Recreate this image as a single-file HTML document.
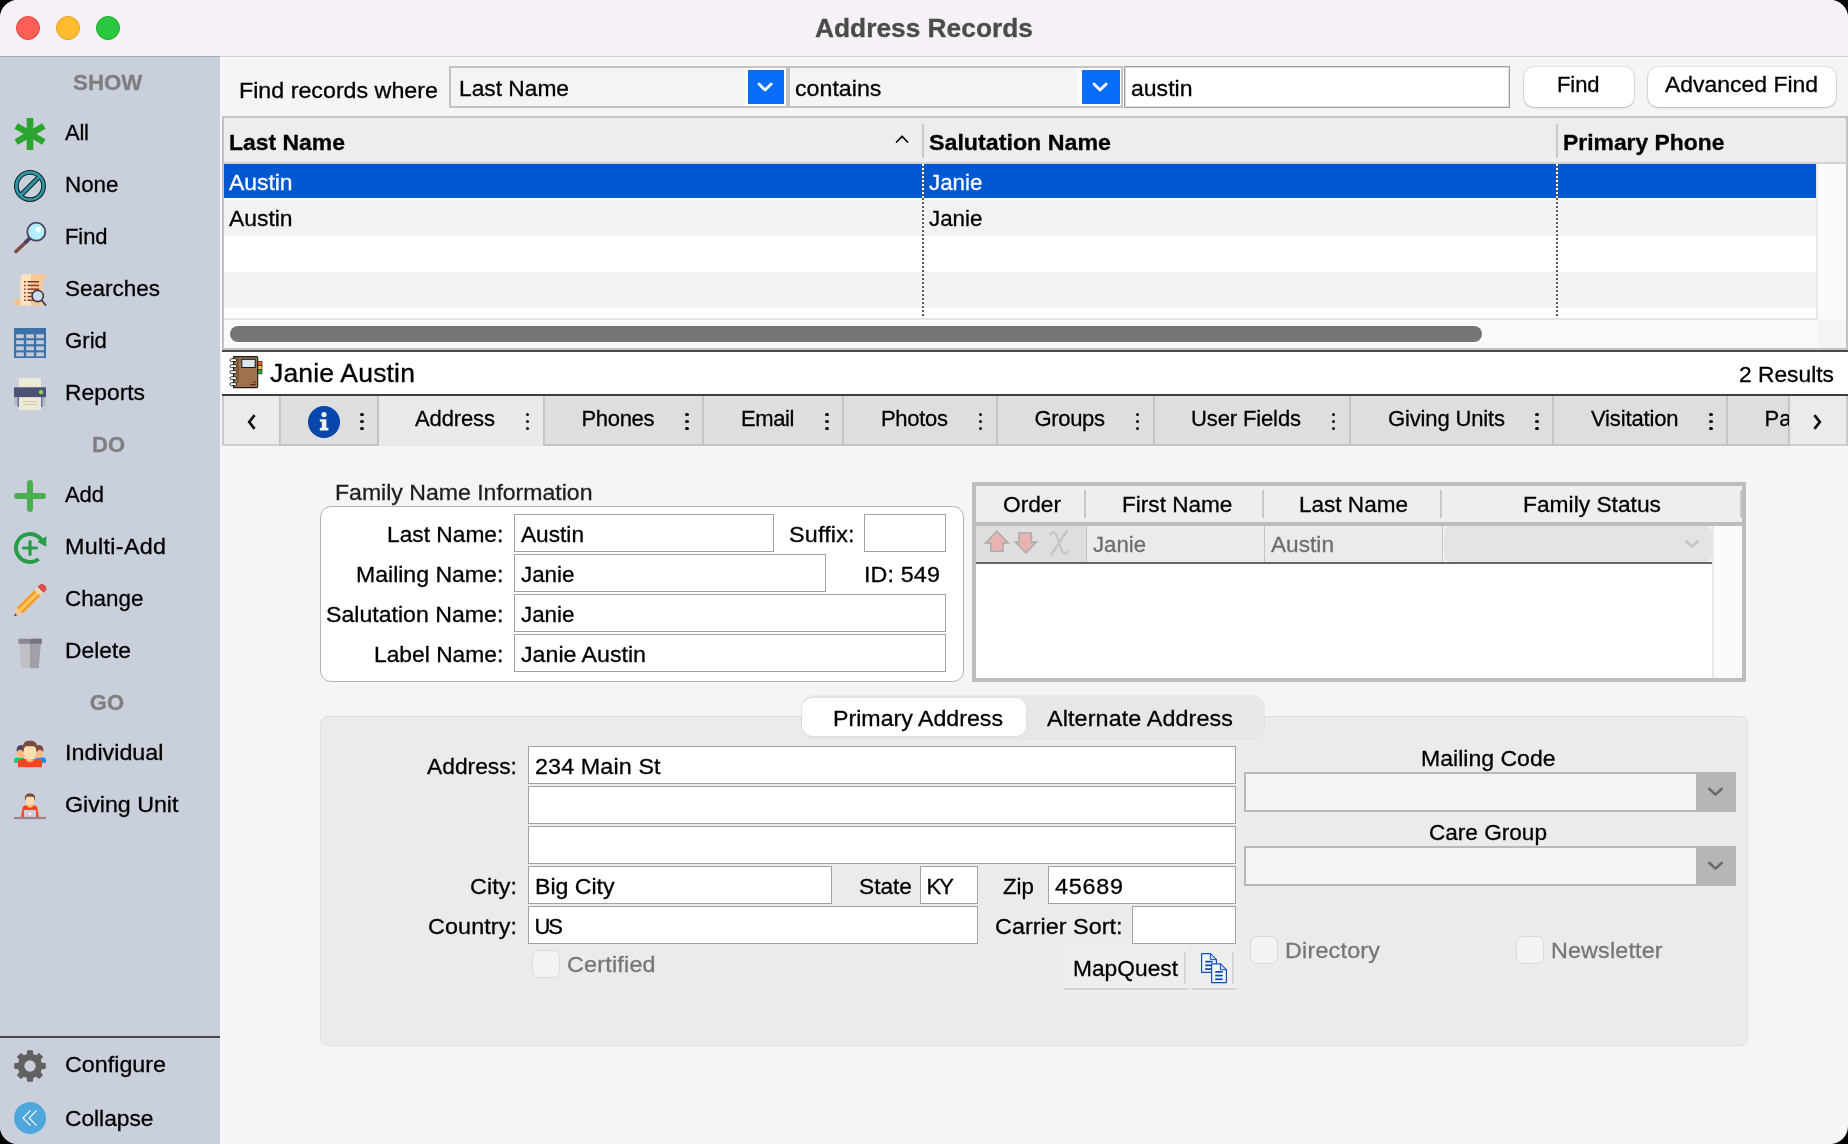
<!DOCTYPE html>
<html><head><meta charset="utf-8"><title>Address Records</title>
<style>
html,body{margin:0;padding:0;background:#000;}
body{width:1848px;height:1144px;overflow:hidden;position:relative;font-family:"Liberation Sans",sans-serif;}
#win{position:absolute;left:0;top:0;width:1848px;height:1144px;border-radius:18px;overflow:hidden;background:#f5f5f5;}
#win div,#win span,#win svg{position:absolute;box-sizing:border-box;}
.t{white-space:nowrap;line-height:1;transform-origin:0 0;-webkit-text-stroke:0.3px;}
#tl{left:0;top:0;width:1848px;height:1144px;will-change:transform;}
.in{background:#fff;border:1px solid #a3a3a3;}
</style></head><body><div id="win">
<div style="left:0px;top:0px;width:1848px;height:56px;background:#f6f1f7;"></div>
<div style="left:0px;top:56px;width:1848px;height:1px;background:#d2d0d4;"></div>
<div style="left:16px;top:16px;width:24px;height:24px;border-radius:50%;background:#fe5f57;border:1px solid #e0443e;"></div>
<div style="left:56px;top:16px;width:24px;height:24px;border-radius:50%;background:#febc2e;border:1px solid #dea123;"></div>
<div style="left:96px;top:16px;width:24px;height:24px;border-radius:50%;background:#28c840;border:1px solid #1aab29;"></div>
<div style="left:0px;top:57px;width:220px;height:1087px;background:#c9d0db;"></div>
<div style="left:0px;top:56px;width:220px;height:1px;background:#a3acb8;"></div>
<div style="left:0px;top:1036px;width:220px;height:2px;background:#484848;"></div>
<div style="left:449px;top:66px;width:339px;height:42px;background:#f4f4f4;border:2px solid #c3c3c3;overflow:hidden;"><div style="left:297px;top:2px;width:36px;height:34px;background:#096df9;box-shadow:0 0 0 2px #fff,-3px 0 2px 1px rgba(255,255,255,0.8);"><svg width="36" height="34" viewBox="0 0 36 34" style="left:0;top:0"><path d="M11.0 13.9 L17.1 20 L23.2 13.9" fill="none" stroke="#fff" stroke-width="2.8" stroke-linecap="round" stroke-linejoin="round"/></svg></div></div>
<div style="left:788px;top:66px;width:335px;height:42px;background:#f4f4f4;border:2px solid #c3c3c3;overflow:hidden;"><div style="left:292px;top:2px;width:38px;height:34px;background:#096df9;box-shadow:0 0 0 2px #fff,-3px 0 2px 1px rgba(255,255,255,0.8);"><svg width="38" height="34" viewBox="0 0 38 34" style="left:0;top:0"><path d="M12.0 13.9 L18.1 20 L24.2 13.9" fill="none" stroke="#fff" stroke-width="2.8" stroke-linecap="round" stroke-linejoin="round"/></svg></div></div>
<div style="left:1124px;top:66px;width:386px;height:42px;background:#fff;border:1px solid #9e9e9e;box-shadow:inset 0 0 0 1px #dcdcdc;"></div>
<div style="left:1524px;top:67px;width:110px;height:40px;background:#fff;border-radius:10px;box-shadow:0 0 0 1px rgba(0,0,0,0.07),0 1px 2px rgba(0,0,0,0.18);"></div>
<div style="left:1648px;top:67px;width:188px;height:40px;background:#fff;border-radius:10px;box-shadow:0 0 0 1px rgba(0,0,0,0.07),0 1px 2px rgba(0,0,0,0.18);"></div>
<div style="left:222px;top:116px;width:1626px;height:234px;background:#c2c2c2;"></div>
<div style="left:224px;top:118px;width:1622px;height:230px;background:#fff;"></div>
<div style="left:224px;top:118px;width:1622px;height:45px;background:#ededed;"></div>
<div style="left:224px;top:162px;width:1622px;height:2px;background:#d5d2ce;"></div>
<div style="left:224px;top:164px;width:1592px;height:34px;background:#0058d0;"></div>
<div style="left:224px;top:200px;width:1592px;height:36px;background:#f1f2f2;"></div>
<div style="left:224px;top:272px;width:1592px;height:36px;background:#f1f2f2;"></div>
<div style="left:1816px;top:164px;width:30px;height:156px;background:#fafafa;border-left:2px solid #e9e9e9;"></div>
<div style="left:224px;top:318px;width:1594px;height:2px;background:#e6e6e6;"></div>
<div style="left:224px;top:320px;width:1622px;height:28px;background:#fafafa;"></div>
<div style="left:1818px;top:320px;width:28px;height:28px;background:#f4f4f4;"></div>
<div style="left:230px;top:326px;width:1252px;height:16px;background:#757575;border-radius:8px;"></div>
<div style="left:922px;top:124px;width:2px;height:34px;background:#c9c9c9;"></div>
<div style="left:1556px;top:124px;width:2px;height:34px;background:#c9c9c9;"></div>
<div style="left:922px;top:164px;width:2px;height:153px;background-image:repeating-linear-gradient(to bottom,#fff 0,#fff 2px,#5c5854 2px,#5c5854 4px);"></div>
<div style="left:1556px;top:164px;width:2px;height:153px;background-image:repeating-linear-gradient(to bottom,#fff 0,#fff 2px,#5c5854 2px,#5c5854 4px);"></div>
<svg width="16" height="12" viewBox="0 0 16 12" style="left:894px;top:132px"><path d="M2.6 10 L8.1 4.3 L13.6 10" fill="none" stroke="#111" stroke-width="1.8" stroke-linecap="round" stroke-linejoin="round"/></svg>
<div style="left:222px;top:350px;width:1626px;height:2px;background:#4a4a4a;"></div>
<div style="left:222px;top:352px;width:1626px;height:42px;background:#fff;"></div>
<div style="left:222px;top:394px;width:1626px;height:2px;background:#3c3c3c;"></div>
<div style="left:222px;top:396px;width:1626px;height:50px;background:#dedede;"></div>
<div style="left:222px;top:444px;width:1626px;height:2px;background:#c5c5c5;"></div>
<div style="left:222px;top:396px;width:58px;height:50px;background:#ebebeb;border-left:2px solid #c9c9c9;border-bottom:2px solid #cfcfcf;"></div>
<div style="left:1789px;top:396px;width:57px;height:50px;background:#ebebeb;border-bottom:2px solid #cfcfcf;"></div>
<div style="left:1846px;top:396px;width:2px;height:50px;background:#c9c9c9;"></div>
<div style="left:378px;top:396px;width:166px;height:50px;background:#eaeaea;"></div>
<div style="left:279px;top:396px;width:2px;height:50px;background:#c5c5c5;"></div>
<div style="left:377px;top:396px;width:2px;height:50px;background:#c5c5c5;"></div>
<div style="left:543px;top:396px;width:2px;height:50px;background:#c5c5c5;"></div>
<div style="left:702px;top:396px;width:2px;height:50px;background:#c5c5c5;"></div>
<div style="left:842px;top:396px;width:2px;height:50px;background:#c5c5c5;"></div>
<div style="left:996px;top:396px;width:2px;height:50px;background:#c5c5c5;"></div>
<div style="left:1153px;top:396px;width:2px;height:50px;background:#c5c5c5;"></div>
<div style="left:1349px;top:396px;width:2px;height:50px;background:#c5c5c5;"></div>
<div style="left:1552px;top:396px;width:2px;height:50px;background:#c5c5c5;"></div>
<div style="left:1726px;top:396px;width:2px;height:50px;background:#c5c5c5;"></div>
<div style="left:1788px;top:396px;width:2px;height:50px;background:#c5c5c5;"></div>
<div style="left:360.4px;top:412.5px;width:3.2000000000000455px;height:3.2000000000000455px;background:#0a0a0a;border-radius:50%;"></div>
<div style="left:360.4px;top:419.79999999999995px;width:3.2000000000000455px;height:3.2000000000000455px;background:#0a0a0a;border-radius:50%;"></div>
<div style="left:360.4px;top:427.09999999999997px;width:3.2000000000000455px;height:3.2000000000000455px;background:#0a0a0a;border-radius:50%;"></div>
<div style="left:525.9px;top:412.5px;width:3.2000000000000455px;height:3.2000000000000455px;background:#0a0a0a;border-radius:50%;"></div>
<div style="left:525.9px;top:419.79999999999995px;width:3.2000000000000455px;height:3.2000000000000455px;background:#0a0a0a;border-radius:50%;"></div>
<div style="left:525.9px;top:427.09999999999997px;width:3.2000000000000455px;height:3.2000000000000455px;background:#0a0a0a;border-radius:50%;"></div>
<div style="left:685.4px;top:412.5px;width:3.2000000000000455px;height:3.2000000000000455px;background:#0a0a0a;border-radius:50%;"></div>
<div style="left:685.4px;top:419.79999999999995px;width:3.2000000000000455px;height:3.2000000000000455px;background:#0a0a0a;border-radius:50%;"></div>
<div style="left:685.4px;top:427.09999999999997px;width:3.2000000000000455px;height:3.2000000000000455px;background:#0a0a0a;border-radius:50%;"></div>
<div style="left:825.4px;top:412.5px;width:3.2000000000000455px;height:3.2000000000000455px;background:#0a0a0a;border-radius:50%;"></div>
<div style="left:825.4px;top:419.79999999999995px;width:3.2000000000000455px;height:3.2000000000000455px;background:#0a0a0a;border-radius:50%;"></div>
<div style="left:825.4px;top:427.09999999999997px;width:3.2000000000000455px;height:3.2000000000000455px;background:#0a0a0a;border-radius:50%;"></div>
<div style="left:978.9px;top:412.5px;width:3.2000000000000455px;height:3.2000000000000455px;background:#0a0a0a;border-radius:50%;"></div>
<div style="left:978.9px;top:419.79999999999995px;width:3.2000000000000455px;height:3.2000000000000455px;background:#0a0a0a;border-radius:50%;"></div>
<div style="left:978.9px;top:427.09999999999997px;width:3.2000000000000455px;height:3.2000000000000455px;background:#0a0a0a;border-radius:50%;"></div>
<div style="left:1135.9px;top:412.5px;width:3.199999999999818px;height:3.2000000000000455px;background:#0a0a0a;border-radius:50%;"></div>
<div style="left:1135.9px;top:419.79999999999995px;width:3.199999999999818px;height:3.2000000000000455px;background:#0a0a0a;border-radius:50%;"></div>
<div style="left:1135.9px;top:427.09999999999997px;width:3.199999999999818px;height:3.2000000000000455px;background:#0a0a0a;border-radius:50%;"></div>
<div style="left:1331.9px;top:412.5px;width:3.199999999999818px;height:3.2000000000000455px;background:#0a0a0a;border-radius:50%;"></div>
<div style="left:1331.9px;top:419.79999999999995px;width:3.199999999999818px;height:3.2000000000000455px;background:#0a0a0a;border-radius:50%;"></div>
<div style="left:1331.9px;top:427.09999999999997px;width:3.199999999999818px;height:3.2000000000000455px;background:#0a0a0a;border-radius:50%;"></div>
<div style="left:1535.4px;top:412.5px;width:3.199999999999818px;height:3.2000000000000455px;background:#0a0a0a;border-radius:50%;"></div>
<div style="left:1535.4px;top:419.79999999999995px;width:3.199999999999818px;height:3.2000000000000455px;background:#0a0a0a;border-radius:50%;"></div>
<div style="left:1535.4px;top:427.09999999999997px;width:3.199999999999818px;height:3.2000000000000455px;background:#0a0a0a;border-radius:50%;"></div>
<div style="left:1709.4px;top:412.5px;width:3.199999999999818px;height:3.2000000000000455px;background:#0a0a0a;border-radius:50%;"></div>
<div style="left:1709.4px;top:419.79999999999995px;width:3.199999999999818px;height:3.2000000000000455px;background:#0a0a0a;border-radius:50%;"></div>
<div style="left:1709.4px;top:427.09999999999997px;width:3.199999999999818px;height:3.2000000000000455px;background:#0a0a0a;border-radius:50%;"></div>
<svg width="12" height="18" viewBox="0 0 12 18" style="left:246px;top:413px"><path d="M8.6 2.2 L3.2 9 L8.6 15.8" fill="none" stroke="#111" stroke-width="2.7" stroke-linejoin="miter"/></svg>
<svg width="12" height="18" viewBox="0 0 12 18" style="left:1811px;top:413px"><path d="M3.4 2.2 L8.8 9 L3.4 15.8" fill="none" stroke="#111" stroke-width="2.7" stroke-linejoin="miter"/></svg>
<svg width="34" height="34" viewBox="0 0 34 34" style="left:307px;top:405px"><circle cx="17" cy="17" r="16" fill="#0746ab"/><circle cx="17" cy="9.6" r="2.6" fill="#f0f0f0"/><path d="M12.8 14.2 H19.4 V22.8 H21.4 V25.4 H12.8 V22.8 H14.9 V16.8 H12.8 Z" fill="#f0f0f0"/></svg>
<div style="left:320px;top:506px;width:644px;height:176px;background:#fff;border:1px solid #b4b4b4;border-radius:11px;"></div>
<div style="left:514px;top:514px;width:260px;height:38px;background:#fff;border:1px solid #a3a3a3;"></div>
<div style="left:864px;top:514px;width:82px;height:38px;background:#fff;border:1px solid #a3a3a3;"></div>
<div style="left:514px;top:554px;width:312px;height:38px;background:#fff;border:1px solid #a3a3a3;"></div>
<div style="left:514px;top:594px;width:432px;height:38px;background:#fff;border:1px solid #a3a3a3;"></div>
<div style="left:514px;top:634px;width:432px;height:38px;background:#fff;border:1px solid #a3a3a3;"></div>
<div style="left:972px;top:482px;width:774px;height:200px;background:#bdbdbd;"></div>
<div style="left:976px;top:486px;width:766px;height:192px;background:#fff;"></div>
<div style="left:976px;top:486px;width:766px;height:36px;background:#eeeeee;"></div>
<div style="left:976px;top:522px;width:766px;height:4px;background:#bdbdbd;"></div>
<div style="left:1084px;top:490px;width:2px;height:28px;background:#c9c9c9;"></div>
<div style="left:1262px;top:490px;width:2px;height:28px;background:#c9c9c9;"></div>
<div style="left:1440px;top:490px;width:2px;height:28px;background:#c9c9c9;"></div>
<div style="left:1740px;top:490px;width:2px;height:28px;background:#c9c9c9;"></div>
<div style="left:976px;top:526px;width:110px;height:36px;background:#dedede;"></div>
<div style="left:1086px;top:526px;width:1px;height:36px;background:#c4c4c4;"></div>
<div style="left:1087px;top:526px;width:177px;height:36px;background:#ebebeb;"></div>
<div style="left:1264px;top:526px;width:1px;height:36px;background:#c4c4c4;"></div>
<div style="left:1265px;top:526px;width:177px;height:36px;background:#ebebeb;"></div>
<div style="left:1442px;top:526px;width:1px;height:36px;background:#c4c4c4;"></div>
<div style="left:1443px;top:526px;width:269px;height:36px;background:#f2f2f2;"></div>
<div style="left:1444px;top:526px;width:268px;height:36px;background:#e4e4e4;border-radius:7px;"></div>
<svg width="18" height="12" viewBox="0 0 18 12" style="left:1683px;top:538px"><path d="M3.2 3.2 L9 8.6 L14.800 3.2" fill="none" stroke="#c4c4c4" stroke-width="2.6" stroke-linecap="round" stroke-linejoin="round"/></svg>
<div style="left:976px;top:562px;width:736px;height:2px;background:#666;"></div>
<div style="left:1712px;top:526px;width:30px;height:152px;background:#fafafa;border-left:2px solid #e9e9e9;"></div>
<div style="left:320px;top:716px;width:1428px;height:330px;background:#ebebeb;border:1px solid #dfdfdf;border-radius:8px;"></div>
<div style="left:802px;top:696px;width:462px;height:42px;background:#e7e7e7;border-radius:11px;box-shadow:0 0 0 1px rgba(0,0,0,0.04);"></div>
<div style="left:802px;top:698px;width:224px;height:38px;background:#fff;border-radius:10px;box-shadow:0 0 2px rgba(0,0,0,0.10);"></div>
<div style="left:528px;top:746px;width:708px;height:38px;background:#fff;border:1px solid #a3a3a3;"></div>
<div style="left:528px;top:786px;width:708px;height:38px;background:#fff;border:1px solid #a3a3a3;"></div>
<div style="left:528px;top:826px;width:708px;height:38px;background:#fff;border:1px solid #a3a3a3;"></div>
<div style="left:528px;top:866px;width:304px;height:38px;background:#fff;border:1px solid #a3a3a3;"></div>
<div style="left:920px;top:866px;width:58px;height:38px;background:#fff;border:1px solid #a3a3a3;"></div>
<div style="left:1048px;top:866px;width:188px;height:38px;background:#fff;border:1px solid #a3a3a3;"></div>
<div style="left:528px;top:906px;width:450px;height:38px;background:#fff;border:1px solid #a3a3a3;"></div>
<div style="left:1132px;top:906px;width:104px;height:38px;background:#fff;border:1px solid #a3a3a3;"></div>
<div style="left:532px;top:950px;width:28px;height:28px;background:#f3f3f3;border:1px solid #d9d9d9;border-radius:7px;"></div>
<div style="left:1250px;top:936px;width:28px;height:28px;background:#f3f3f3;border:1px solid #d9d9d9;border-radius:7px;"></div>
<div style="left:1516px;top:936px;width:28px;height:28px;background:#f3f3f3;border:1px solid #d9d9d9;border-radius:7px;"></div>
<div style="left:1064px;top:946px;width:124px;height:44px;background:#eeeeee;border-bottom:2px solid #d2d2d2;"></div>
<div style="left:1184px;top:952px;width:2px;height:32px;background:#d4d4d4;"></div>
<div style="left:1192px;top:946px;width:44px;height:44px;background:#eeeeee;border-bottom:2px solid #d2d2d2;"></div>
<div style="left:1232px;top:952px;width:2px;height:32px;background:#d4d4d4;"></div>
<div style="left:1244px;top:772px;width:492px;height:40px;background:#f5f5f5;border:2px solid #b9b9b9;"></div>
<div style="left:1696px;top:772px;width:40px;height:40px;background:#b6b6b6;"><svg width="40" height="40" viewBox="0 0 40 40" style="left:0;top:0"><path d="M13.2 16.8 L19.5 22.6 L25.8 16.8" fill="none" stroke="#6a6a6a" stroke-width="2.6" stroke-linecap="round" stroke-linejoin="round"/></svg></div>
<div style="left:1244px;top:846px;width:492px;height:40px;background:#f5f5f5;border:2px solid #b9b9b9;"></div>
<div style="left:1696px;top:846px;width:40px;height:40px;background:#b6b6b6;"><svg width="40" height="40" viewBox="0 0 40 40" style="left:0;top:0"><path d="M13.2 16.8 L19.5 22.6 L25.8 16.8" fill="none" stroke="#6a6a6a" stroke-width="2.6" stroke-linecap="round" stroke-linejoin="round"/></svg></div>
<svg width="220" height="1144" viewBox="0 0 220 1144" style="left:0;top:0"><g fill="#2ba52e" transform="translate(30 134)"><rect x="-3.3" y="-16" width="6.6" height="32" transform="rotate(0)"/><rect x="-3.3" y="-16" width="6.6" height="32" transform="rotate(60)"/><rect x="-3.3" y="-16" width="6.6" height="32" transform="rotate(120)"/></g><g fill="none" transform="translate(30 186)"><circle r="13.6" stroke="#10262b" stroke-width="4.8"/><line x1="-9" y1="9" x2="9" y2="-9" stroke="#10262b" stroke-width="5.2"/><circle r="13.6" stroke="#2f97a8" stroke-width="2.6"/><line x1="-9.5" y1="9.5" x2="9.5" y2="-9.5" stroke="#2f97a8" stroke-width="2.8"/></g><g><line x1="27" y1="241" x2="16" y2="251.5" stroke="#7b4a45" stroke-width="3.6" stroke-linecap="round"/><line x1="29.5" y1="238.5" x2="26" y2="242" stroke="#4a4060" stroke-width="3.8" stroke-linecap="round"/><circle cx="36.3" cy="231.7" r="9" fill="#b3eefc" stroke="#4a4262" stroke-width="1.8"/><circle cx="38.5" cy="229.6" r="2.8" fill="#fff"/></g><g><path d="M20.5 279 Q20.5 274 25 274 H43 Q46 274 46 277 Q46 280 43 280 H42.5 V305.5 H18 Q14 305.5 14 302 Q14 299 17 299 H20.5 Z" fill="#fde2bf"/><path d="M31 274 H43 Q46 274 46 277 Q46 280 43 280 H42.5 V305.5 H31 Z" fill="#f6c896"/><path d="M20.5 299 V305.5 H18 Q14 305.5 14 302 Q14 299 17 299 Z" fill="#f3c08c"/><rect x="27.5" y="281" width="11.5" height="1.5" fill="#8a3a28"/><rect x="24" y="281" width="1.6" height="1.5" fill="#8a3a28"/><rect x="27.5" y="284.7" width="11.5" height="1.5" fill="#8a3a28"/><rect x="24" y="284.7" width="1.6" height="1.5" fill="#8a3a28"/><rect x="27.5" y="288.4" width="11.5" height="1.5" fill="#8a3a28"/><rect x="24" y="288.4" width="1.6" height="1.5" fill="#8a3a28"/><rect x="27.5" y="292.1" width="11.5" height="1.5" fill="#8a3a28"/><rect x="24" y="292.1" width="1.6" height="1.5" fill="#8a3a28"/><rect x="27.5" y="295.8" width="11.5" height="1.5" fill="#8a3a28"/><rect x="24" y="295.8" width="1.6" height="1.5" fill="#8a3a28"/><rect x="27.5" y="299.5" width="11.5" height="1.5" fill="#8a3a28"/><rect x="24" y="299.5" width="1.6" height="1.5" fill="#8a3a28"/><line x1="41.5" y1="300" x2="45.5" y2="305" stroke="#3b3d4b" stroke-width="1.8" stroke-linecap="round"/><circle cx="37.7" cy="296" r="5.6" fill="#d3dcee" stroke="#3b3d4b" stroke-width="1.6"/></g><rect x="14" y="328" width="32" height="30" fill="#3c71a9"/><rect x="16.1" y="334.3" width="7.7" height="3.9" fill="#c3cbd8"/><rect x="16.1" y="340.3" width="7.7" height="3.9" fill="#c3cbd8"/><rect x="16.1" y="346.4" width="7.7" height="3.9" fill="#c3cbd8"/><rect x="16.1" y="352.4" width="7.7" height="3.9" fill="#c3cbd8"/><rect x="26.2" y="334.3" width="7.7" height="3.9" fill="#c3cbd8"/><rect x="26.2" y="340.3" width="7.7" height="3.9" fill="#c3cbd8"/><rect x="26.2" y="346.4" width="7.7" height="3.9" fill="#c3cbd8"/><rect x="26.2" y="352.4" width="7.7" height="3.9" fill="#c3cbd8"/><rect x="36.2" y="334.3" width="7.7" height="3.9" fill="#c3cbd8"/><rect x="36.2" y="340.3" width="7.7" height="3.9" fill="#c3cbd8"/><rect x="36.2" y="346.4" width="7.7" height="3.9" fill="#c3cbd8"/><rect x="36.2" y="352.4" width="7.7" height="3.9" fill="#c3cbd8"/><g><rect x="19" y="378" width="22" height="10" fill="#ece9d8"/><rect x="14.5" y="397" width="3" height="8.5" fill="#b7b7b7"/><rect x="42.5" y="397" width="3" height="8.5" fill="#b7b7b7"/><rect x="17.5" y="397" width="1.6" height="10" fill="#5f6eb0"/><rect x="40.9" y="397" width="1.6" height="10" fill="#5f6eb0"/><rect x="19" y="396" width="22" height="14" fill="#ece9d8"/><rect x="14" y="387.3" width="32" height="9.8" fill="#4b5273"/><circle cx="41" cy="392.2" r="2.1" fill="#8fd94c"/><rect x="23" y="401" width="14" height="1" fill="#d6cfa6"/><rect x="23" y="404" width="14" height="1" fill="#d6cfa6"/></g><g stroke="#4bae51" stroke-width="6" stroke-linecap="round"><line x1="17" y1="496" x2="43" y2="496"/><line x1="30" y1="483" x2="30" y2="509"/></g><g fill="none" stroke="#2a9b49"><path d="M38.62 559.03 A14 14 0 1 1 43.31 543.67" stroke-width="4"/><line x1="23.5" y1="548" x2="36.5" y2="548" stroke-width="3.2" stroke-linecap="round"/><line x1="30" y1="541.5" x2="30" y2="554.5" stroke-width="3.2" stroke-linecap="round"/></g><path d="M37.5 542 L46.3 536.3 L46.3 546.8 Z" fill="#2a9b49"/><g transform="translate(14.2 616.2) rotate(-45)"><path d="M0 0 L8 -4.2 V4.2 Z" fill="#f6c692"/><path d="M0 0 L2.6 -1.4 V1.4 Z" fill="#3a3a3a"/><rect x="8" y="-4.2" width="25" height="8.4" fill="#f6a02b"/><rect x="8" y="-1.4" width="25" height="2.8" fill="#fbc85e"/><rect x="33" y="-4.2" width="4.2" height="8.4" fill="#f1e3c4"/><rect x="34.2" y="-4.2" width="0.9" height="8.4" fill="#d9c79d"/><path d="M37.2 -4.2 H40 Q43.5 -4.2 43.5 0 Q43.5 4.2 40 4.2 H37.2 Z" fill="#d9504c"/></g><g><path d="M19.3 643.5 H30 V668.3 H21.2 Z" fill="#c2c0c6"/><path d="M30 643.5 H40.8 L38.9 668.3 H30 Z" fill="#a19fa8"/><rect x="18.4" y="638.6" width="11.6" height="5.2" fill="#8b8992"/><rect x="30" y="638.6" width="11.8" height="5.2" fill="#76747e"/><rect x="26.5" y="636.6" width="7" height="2.4" rx="1" fill="#c6c9d2"/></g><g><path d="M14 762.8 V760.5 Q14 757.6 17 757.6 H24 V762.8 Z" fill="#25c66a"/><path d="M46 762.8 V760.5 Q46 757.6 43 757.6 H36 V762.8 Z" fill="#1e8fe8"/><ellipse cx="21.2" cy="752.2" rx="4.6" ry="5.6" fill="#fdbb85"/><path d="M16.6 751 Q16.3 745 21 745 Q24 745 25 747 L23 751 Q19 748.5 17.6 751.5 Z" fill="#4c4763"/><ellipse cx="38.8" cy="752.2" rx="4.6" ry="5.6" fill="#fdbb85"/><path d="M43.4 751 Q43.7 745 39 745 Q36 745 35 747 L37 751 Q41 748.5 42.4 751.5 Z" fill="#7a4a42"/><path d="M18 767.3 V762 Q18 759 21.5 759 H38.5 Q42 759 42 762 V767.3 Z" fill="#ff4421"/><path d="M26 757 H34 V760 Q30 764.5 26 760 Z" fill="#fdbb85"/><ellipse cx="30" cy="751.3" rx="6.6" ry="8" fill="#ffdfae"/><path d="M22.2 751.5 Q21.3 740.6 30 740.6 Q38.7 740.6 37.8 751.5 L36.4 751.5 Q36.6 746.5 33.5 746.3 H26.5 Q23.4 746.5 23.6 751.5 Z" fill="#7b4b41"/></g><g><path d="M21 817.2 L22.6 807.8 Q23 805.6 25.5 805.6 H34.5 Q37 805.6 37.4 807.8 L39 817.2 Z" fill="#ff4421"/><path d="M26.8 803.5 H33.2 V806 Q30 809.5 26.800 806 Z" fill="#fdbb85"/><ellipse cx="30" cy="800" rx="4.3" ry="5.3" fill="#ffdfae"/><path d="M24.9 800.2 Q24 793.3 30 793.3 Q36 793.3 35.1 800.2 L34.3 800.2 Q34.4 796.8 32.3 796.7 H27.7 Q25.6 796.8 25.7 800.2 Z" fill="#7b4b41"/><rect x="23.9" y="810" width="12.2" height="7.2" rx="0.8" fill="#c9ced8"/><rect x="28.9" y="812.6" width="2.2" height="2.2" fill="#fff"/><rect x="14" y="816.9" width="32" height="2.2" fill="#a08284"/></g><path fill-rule="evenodd" fill="#616161" d="M26.71 1054.15 L27.22 1050.24 L32.78 1050.24 L33.29 1054.15 L36.06 1055.29 L39.18 1052.89 L43.11 1056.82 L40.71 1059.94 L41.85 1062.71 L45.76 1063.22 L45.76 1068.78 L41.85 1069.29 L40.71 1072.06 L43.11 1075.18 L39.18 1079.11 L36.06 1076.71 L33.29 1077.85 L32.78 1081.76 L27.22 1081.76 L26.71 1077.85 L23.94 1076.71 L20.82 1079.11 L16.89 1075.18 L19.29 1072.06 L18.15 1069.29 L14.24 1068.78 L14.24 1063.22 L18.15 1062.71 L19.29 1059.94 L16.89 1056.82 L20.82 1052.89 L23.94 1055.29 Z M35.7 1066 A5.7 5.7 0 1 0 24.3 1066 A5.7 5.7 0 1 0 35.700 1066 Z"/><circle cx="30" cy="1118" r="16" fill="#4da7dd"/><g fill="none" stroke="#fff" stroke-width="1.1"><path d="M30.5 1110.3 L23 1118 L30.5 1125.7"/><path d="M36.6 1110.3 L29.1 1118 L36.6 1125.7"/></g></svg>
<svg width="36" height="34" viewBox="0 0 36 34" style="left:229px;top:355px"><rect x="28" y="6.3" width="5" height="4" fill="#f05a28" stroke="#1a1a1a" stroke-width="0.6"/><rect x="28" y="10.6" width="5" height="4" fill="#f6c61c" stroke="#1a1a1a" stroke-width="0.6"/><rect x="28" y="14.9" width="5" height="4" fill="#2fa83c" stroke="#1a1a1a" stroke-width="0.6"/><path d="M4.6 1.6 H27.6 Q28.7 1.6 28.7 2.7 V31.5 Q28.7 32.6 27.6 32.6 H4.6 Z" fill="#a0714d" stroke="#1a1a1a" stroke-width="1.1"/><rect x="8.3" y="3.2" width="1.3" height="24.5" fill="#6d452a"/><rect x="12.8" y="4.3" width="13.4" height="8.2" fill="#dbe5ec" stroke="#1a1a1a" stroke-width="1"/><rect x="21" y="29.2" width="6" height="1" fill="#3a2416"/><rect x="24.5" y="26.6" width="2.6" height="1" fill="#3a2416"/><rect x="1" y="3.7" width="6.6" height="2.9" rx="1.45" fill="#fff" stroke="#1a1a1a" stroke-width="0.9"/><rect x="1" y="9.7" width="6.6" height="2.9" rx="1.45" fill="#fff" stroke="#1a1a1a" stroke-width="0.9"/><rect x="1" y="15.7" width="6.6" height="2.9" rx="1.45" fill="#fff" stroke="#1a1a1a" stroke-width="0.9"/><rect x="1" y="21.7" width="6.6" height="2.9" rx="1.45" fill="#fff" stroke="#1a1a1a" stroke-width="0.9"/><rect x="1" y="27.7" width="6.6" height="2.9" rx="1.45" fill="#fff" stroke="#1a1a1a" stroke-width="0.9"/></svg>
<svg width="30" height="34" viewBox="0 0 30 34" style="left:1200px;top:951px"><path d="M1.6 2.6 H10.400000000000002 L16.400000000000002 8.6 V21.400000000000002 H1.6 Z" fill="#f3f7ff" stroke="#0f4dbd" stroke-width="1.2" stroke-linejoin="round"/><path d="M10.400000000000002 2.6 V8.6 H16.400000000000002 Z" fill="#c9dcf9" stroke="#0f4dbd" stroke-width="1" stroke-linejoin="round"/><rect x="5.2" y="9.8" width="7.6" height="1.7" fill="#0f45b0"/><rect x="5.2" y="13.5" width="7.6" height="1.7" fill="#0f45b0"/><rect x="5.2" y="17.2" width="7.6" height="1.7" fill="#0f45b0"/><path d="M11.6 12.8 H20.4 L26.4 18.8 V31.6 H11.6 Z" fill="#f3f7ff" stroke="#0f4dbd" stroke-width="1.2" stroke-linejoin="round"/><path d="M20.4 12.8 V18.8 H26.4 Z" fill="#c9dcf9" stroke="#0f4dbd" stroke-width="1" stroke-linejoin="round"/><rect x="15.2" y="20.0" width="7.6" height="1.7" fill="#0f45b0"/><rect x="15.2" y="23.700000000000003" width="7.6" height="1.7" fill="#0f45b0"/><rect x="15.2" y="27.4" width="7.6" height="1.7" fill="#0f45b0"/></svg>
<svg width="92" height="30" viewBox="0 0 92 30" style="left:980px;top:528px"><path d="M16.9 3.2 L28.2 15 H23 V23.2 H10.800 V15 H5.6 Z" fill="#e9b3b1" stroke="#ababab" stroke-width="1.5" stroke-linejoin="miter"/><path d="M45.9 24.9 L56.4 14 H51.4 V5 H39 V14 H35.4 Z" fill="#e9b3b1" stroke="#ababab" stroke-width="1.5" stroke-linejoin="miter"/><g stroke="#c6c6c6" stroke-linecap="round" fill="none"><path d="M86.8 3 L71.3 26.6" stroke-width="2.6"/><path d="M70.6 6.8 Q71.5 3.2 74.3 4.4 Q77 6.5 79 14.8 Q81 23 83.8 25.4 Q86.6 27 87.4 23.6" stroke-width="2.2"/></g></svg>
<div id="tl"><span class="t" style="left:815.00px;top:15.39px;font-size:26px;font-weight:700;color:#4b4b4b;letter-spacing:0.000px;transform:scaleX(1.0122);">Address Records</span>
<span class="t" style="left:72.50px;top:71.78px;font-size:22px;font-weight:700;color:#7f7f7f;letter-spacing:0.000px;transform:scaleX(1.0146);">SHOW</span>
<span class="t" style="left:92.00px;top:433.78px;font-size:22px;font-weight:700;color:#7f7f7f;letter-spacing:0.200px;">DO</span>
<span class="t" style="left:89.80px;top:691.78px;font-size:22px;font-weight:700;color:#7f7f7f;letter-spacing:0.000px;">GO</span>
<span class="t" style="left:65.00px;top:122.28px;font-size:22px;color:#000;letter-spacing:-0.250px;">All</span>
<span class="t" style="left:65.00px;top:174.28px;font-size:22px;color:#000;letter-spacing:0.000px;transform:scaleX(1.0166);">None</span>
<span class="t" style="left:65.00px;top:226.28px;font-size:22px;color:#000;letter-spacing:-0.083px;">Find</span>
<span class="t" style="left:65.00px;top:278.28px;font-size:22px;color:#000;letter-spacing:0.000px;transform:scaleX(1.0215);">Searches</span>
<span class="t" style="left:65.00px;top:330.28px;font-size:22px;color:#000;letter-spacing:0.000px;transform:scaleX(1.0090);">Grid</span>
<span class="t" style="left:65.00px;top:382.28px;font-size:22px;color:#000;letter-spacing:0.000px;transform:scaleX(1.0390);">Reports</span>
<span class="t" style="left:65.00px;top:484.28px;font-size:22px;color:#000;letter-spacing:-0.062px;">Add</span>
<span class="t" style="left:65.00px;top:536.28px;font-size:22px;color:#000;letter-spacing:0.301px;transform:scaleX(1.0600);">Multi-Add</span>
<span class="t" style="left:65.00px;top:588.28px;font-size:22px;color:#000;letter-spacing:0.000px;transform:scaleX(1.0178);">Change</span>
<span class="t" style="left:65.00px;top:640.28px;font-size:22px;color:#000;letter-spacing:0.000px;transform:scaleX(1.0373);">Delete</span>
<span class="t" style="left:65.00px;top:742.28px;font-size:22px;color:#000;letter-spacing:0.000px;transform:scaleX(1.0591);">Individual</span>
<span class="t" style="left:65.00px;top:794.28px;font-size:22px;color:#000;letter-spacing:0.000px;transform:scaleX(1.0546);">Giving Unit</span>
<span class="t" style="left:65.00px;top:1054.28px;font-size:22px;color:#000;letter-spacing:0.000px;transform:scaleX(1.0590);">Configure</span>
<span class="t" style="left:65.00px;top:1107.78px;font-size:22px;color:#000;letter-spacing:0.000px;transform:scaleX(1.0336);">Collapse</span>
<span class="t" style="left:239.00px;top:79.78px;font-size:22px;color:#000;letter-spacing:0.000px;transform:scaleX(1.0564);">Find records where</span>
<span class="t" style="left:458.50px;top:77.78px;font-size:22px;color:#000;letter-spacing:0.000px;transform:scaleX(1.0341);">Last Name</span>
<span class="t" style="left:795.00px;top:77.78px;font-size:22px;color:#000;letter-spacing:0.000px;transform:scaleX(1.0549);">contains</span>
<span class="t" style="left:1130.50px;top:77.78px;font-size:22px;color:#000;letter-spacing:0.000px;transform:scaleX(1.0468);">austin</span>
<span class="t" style="left:1557.00px;top:74.28px;font-size:22px;color:#000;letter-spacing:-0.083px;">Find</span>
<span class="t" style="left:1665.00px;top:74.28px;font-size:22px;color:#000;letter-spacing:0.000px;transform:scaleX(1.0426);">Advanced Find</span>
<span class="t" style="left:229.00px;top:132.28px;font-size:22px;font-weight:700;color:#000;letter-spacing:0.000px;transform:scaleX(1.0427);">Last Name</span>
<span class="t" style="left:929.00px;top:132.28px;font-size:22px;font-weight:700;color:#000;letter-spacing:0.000px;transform:scaleX(1.0558);">Salutation Name</span>
<span class="t" style="left:1563.00px;top:132.28px;font-size:22px;font-weight:700;color:#000;letter-spacing:0.000px;transform:scaleX(1.0403);">Primary Phone</span>
<span class="t" style="left:229.00px;top:172.28px;font-size:22px;color:#fff;letter-spacing:-0.000px;transform:scaleX(1.0389);">Austin</span>
<span class="t" style="left:229.00px;top:208.28px;font-size:22px;color:#000;letter-spacing:-0.000px;transform:scaleX(1.0389);">Austin</span>
<span class="t" style="left:929.00px;top:172.28px;font-size:22px;color:#fff;letter-spacing:0.000px;transform:scaleX(1.0166);">Janie</span>
<span class="t" style="left:929.00px;top:208.28px;font-size:22px;color:#000;letter-spacing:0.000px;transform:scaleX(1.0166);">Janie</span>
<span class="t" style="left:270.00px;top:361.24px;font-size:25px;color:#000;letter-spacing:0.174px;transform:scaleX(1.0600);">Janie Austin</span>
<span class="t" style="left:1738.50px;top:363.78px;font-size:22px;color:#000;letter-spacing:0.000px;transform:scaleX(1.0354);">2 Results</span>
<span class="t" style="left:415.00px;top:407.78px;font-size:22px;color:#000;letter-spacing:-0.125px;">Address</span>
<span class="t" style="left:581.50px;top:407.78px;font-size:22px;color:#000;letter-spacing:-0.325px;">Phones</span>
<span class="t" style="left:741.00px;top:407.78px;font-size:22px;color:#000;letter-spacing:-0.375px;">Email</span>
<span class="t" style="left:881.00px;top:407.78px;font-size:22px;color:#000;letter-spacing:-0.300px;">Photos</span>
<span class="t" style="left:1034.50px;top:407.78px;font-size:22px;color:#000;letter-spacing:-0.325px;">Groups</span>
<span class="t" style="left:1191.00px;top:407.78px;font-size:22px;color:#000;letter-spacing:-0.125px;">User Fields</span>
<span class="t" style="left:1388.00px;top:407.78px;font-size:22px;color:#000;letter-spacing:-0.148px;">Giving Units</span>
<span class="t" style="left:1591.00px;top:407.78px;font-size:22px;color:#000;letter-spacing:-0.153px;">Visitation</span>
<div style="left:1760px;top:396px;width:29px;height:48px;overflow:hidden"><span class="t" style="left:4.5px;top:11.78px;font-size:22px">Pa</span></div>
<span class="t" style="left:335.00px;top:482.28px;font-size:22px;color:#1e1e1e;letter-spacing:0.000px;transform:scaleX(1.0478);">Family Name Information</span>
<span class="t" style="left:387.00px;top:523.78px;font-size:22px;color:#000;letter-spacing:0.000px;transform:scaleX(1.0338);">Last Name:</span>
<span class="t" style="left:356.00px;top:563.78px;font-size:22px;color:#000;letter-spacing:0.000px;transform:scaleX(1.0475);">Mailing Name:</span>
<span class="t" style="left:326.00px;top:603.78px;font-size:22px;color:#000;letter-spacing:0.000px;transform:scaleX(1.0507);">Salutation Name:</span>
<span class="t" style="left:374.00px;top:643.78px;font-size:22px;color:#000;letter-spacing:0.000px;transform:scaleX(1.0365);">Label Name:</span>
<span class="t" style="left:788.50px;top:523.78px;font-size:22px;color:#000;letter-spacing:0.174px;transform:scaleX(1.0600);">Suffix:</span>
<span class="t" style="left:864.00px;top:563.78px;font-size:22px;color:#000;letter-spacing:0.116px;transform:scaleX(1.0600);">ID: 549</span>
<span class="t" style="left:521.00px;top:523.78px;font-size:22px;color:#000;letter-spacing:0.000px;transform:scaleX(1.0307);">Austin</span>
<span class="t" style="left:521.00px;top:563.78px;font-size:22px;color:#000;letter-spacing:0.000px;transform:scaleX(1.0166);">Janie</span>
<span class="t" style="left:521.00px;top:603.78px;font-size:22px;color:#000;letter-spacing:0.000px;transform:scaleX(1.0166);">Janie</span>
<span class="t" style="left:521.00px;top:643.78px;font-size:22px;color:#000;letter-spacing:0.000px;transform:scaleX(1.0537);">Janie Austin</span>
<span class="t" style="left:1003.00px;top:494.28px;font-size:22px;color:#000;letter-spacing:0.000px;transform:scaleX(1.0311);">Order</span>
<span class="t" style="left:1121.50px;top:494.28px;font-size:22px;color:#000;letter-spacing:0.000px;transform:scaleX(1.0267);">First Name</span>
<span class="t" style="left:1299.00px;top:494.28px;font-size:22px;color:#000;letter-spacing:0.000px;transform:scaleX(1.0247);">Last Name</span>
<span class="t" style="left:1523.00px;top:494.28px;font-size:22px;color:#000;letter-spacing:0.000px;transform:scaleX(1.0356);">Family Status</span>
<span class="t" style="left:1093.00px;top:533.88px;font-size:22px;color:#6e6e6e;letter-spacing:0.000px;transform:scaleX(1.0071);">Janie</span>
<span class="t" style="left:1271.00px;top:533.88px;font-size:22px;color:#6e6e6e;letter-spacing:0.000px;transform:scaleX(1.0307);">Austin</span>
<span class="t" style="left:833.00px;top:708.03px;font-size:22px;color:#000;letter-spacing:0.000px;transform:scaleX(1.0534);">Primary Address</span>
<span class="t" style="left:1047.00px;top:708.03px;font-size:22px;color:#000;letter-spacing:0.115px;transform:scaleX(1.0600);">Alternate Address</span>
<span class="t" style="left:427.00px;top:755.78px;font-size:22px;color:#000;letter-spacing:0.000px;transform:scaleX(1.0360);">Address:</span>
<span class="t" style="left:470.00px;top:875.78px;font-size:22px;color:#000;letter-spacing:0.085px;transform:scaleX(1.0600);">City:</span>
<span class="t" style="left:428.00px;top:915.78px;font-size:22px;color:#000;letter-spacing:0.120px;transform:scaleX(1.0600);">Country:</span>
<span class="t" style="left:534.50px;top:755.78px;font-size:22px;color:#000;letter-spacing:0.102px;transform:scaleX(1.0600);">234 Main St</span>
<span class="t" style="left:534.50px;top:875.78px;font-size:22px;color:#000;letter-spacing:0.000px;transform:scaleX(1.0495);">Big City</span>
<span class="t" style="left:534.50px;top:915.78px;font-size:22px;color:#000;letter-spacing:-2.125px;">US</span>
<span class="t" style="left:859.00px;top:875.78px;font-size:22px;color:#000;letter-spacing:-0.000px;transform:scaleX(1.0316);">State</span>
<span class="t" style="left:926.50px;top:875.78px;font-size:22px;color:#000;letter-spacing:-1.875px;">KY</span>
<span class="t" style="left:1003.00px;top:875.78px;font-size:22px;color:#000;letter-spacing:0.000px;transform:scaleX(1.0122);">Zip</span>
<span class="t" style="left:1055.00px;top:875.78px;font-size:22px;color:#000;letter-spacing:0.756px;transform:scaleX(1.0600);">45689</span>
<span class="t" style="left:995.00px;top:915.78px;font-size:22px;color:#000;letter-spacing:0.044px;transform:scaleX(1.0600);">Carrier Sort:</span>
<span class="t" style="left:567.00px;top:954.28px;font-size:22px;color:#767676;letter-spacing:0.202px;transform:scaleX(1.0600);">Certified</span>
<span class="t" style="left:1285.00px;top:940.28px;font-size:22px;color:#767676;letter-spacing:0.203px;transform:scaleX(1.0600);">Directory</span>
<span class="t" style="left:1551.00px;top:940.28px;font-size:22px;color:#767676;letter-spacing:0.146px;transform:scaleX(1.0600);">Newsletter</span>
<span class="t" style="left:1073.00px;top:957.78px;font-size:22px;color:#000;letter-spacing:0.000px;transform:scaleX(1.0345);">MapQuest</span>
<span class="t" style="left:1421.00px;top:748.28px;font-size:22px;color:#000;letter-spacing:0.000px;transform:scaleX(1.0477);">Mailing Code</span>
<span class="t" style="left:1428.50px;top:822.28px;font-size:22px;color:#000;letter-spacing:-0.000px;transform:scaleX(1.0261);">Care Group</span></div>
</div></body></html>
